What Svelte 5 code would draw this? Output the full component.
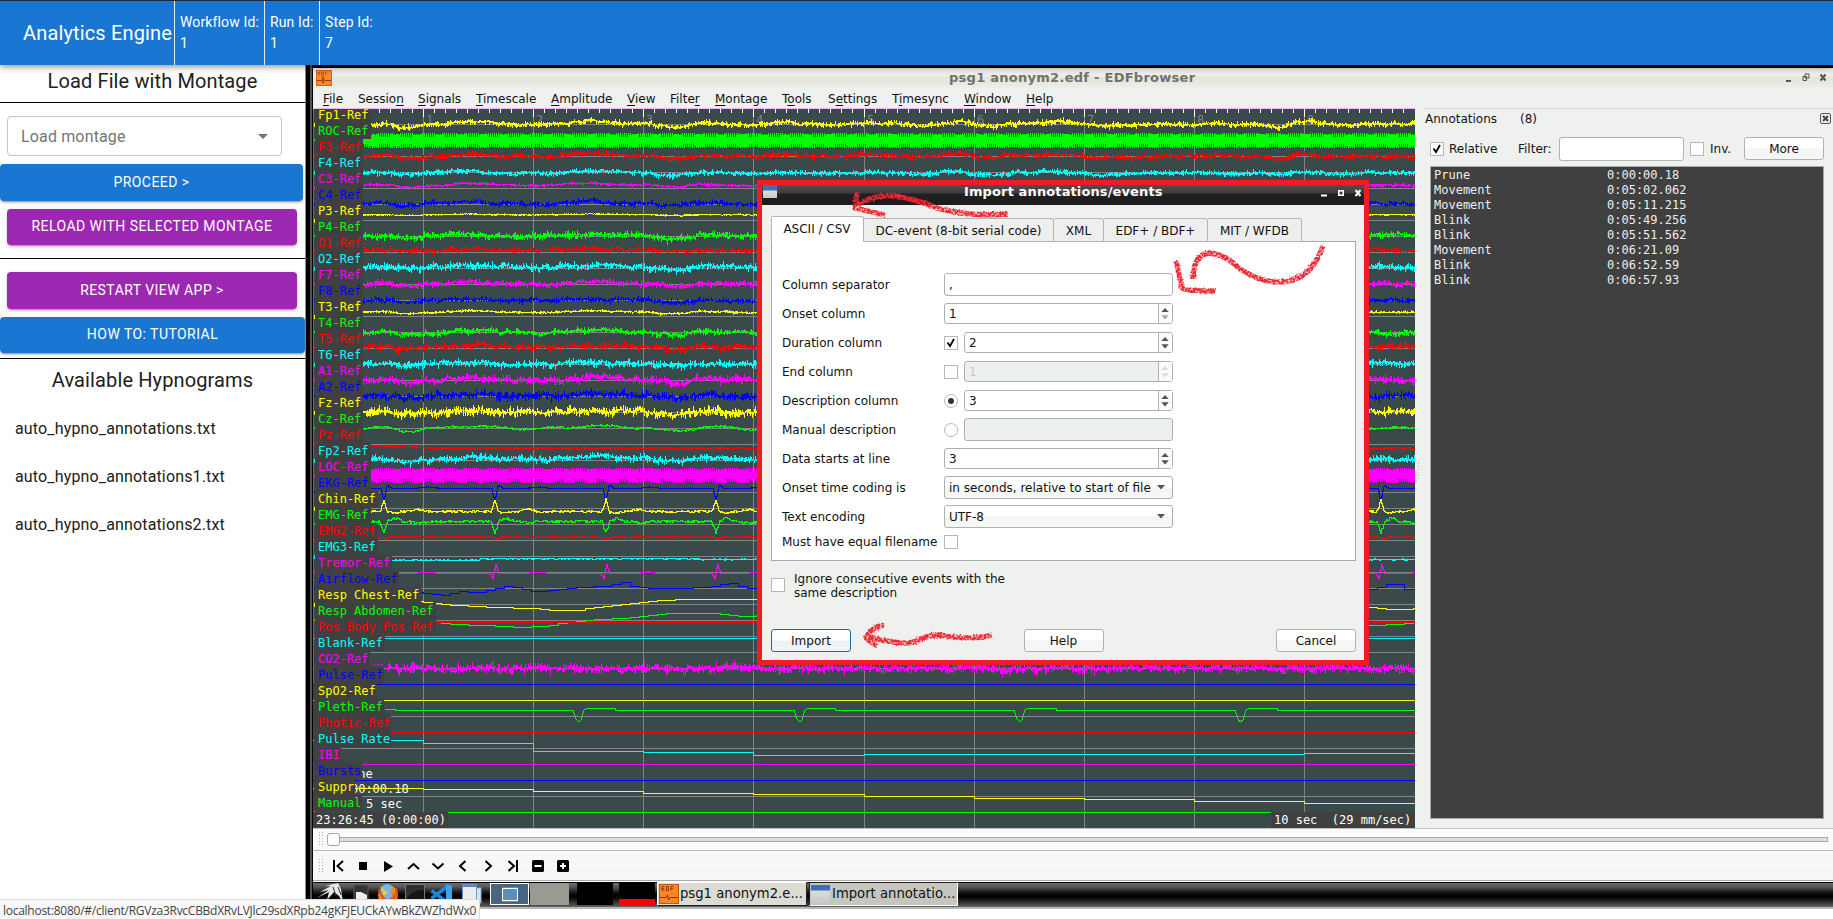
<script>
  const colors = ['#ffff00', '#00ff00', '#ff0000', '#00ffff', '#ff00ff', '#0000ff'];
  const names = ['Fp1-Ref', 'ROC-Ref', 'F3-Ref', 'F4-Ref', 'C3-Ref', 'C4-Ref', 'P3-Ref', 'P4-Ref', 'O1-Ref', 'O2-Ref', 'F7-Ref', 'F8-Ref', 'T3-Ref', 'T4-Ref', 'T5-Ref', 'T6-Ref', 'A1-Ref', 'A2-Ref', 'Fz-Ref', 'Cz-Ref', 'Pz-Ref', 'Fp2-Ref', 'LOC-Ref', 'EKG-Ref', 'Chin-Ref', 'EMG-Ref', 'EMG2-Ref', 'EMG3-Ref', 'Tremor-Ref', 'Airflow-Ref', 'Resp Chest-Ref', 'Resp Abdomen-Ref', 'Pos Body_Pos-Ref', 'Blank-Ref', 'CO2-Ref', 'Pulse-Ref', 'SpO2-Ref', 'Pleth-Ref', 'Photic-Ref', 'Pulse Rate', 'IBI', 'Bursts', 'Suppr', 'Manual'];
  const labels = names.map((name, i) => ({
    name, color: colors[i % 6], y: 107 + 16 * i,
    width: 5 + name.length * 7.22
  }));

  let seed = 20417;
  const rand = () => {
    seed = (seed * 1664525 + 1013904223) % 4294967296;
    return seed / 4294967296;
  };
  const drift = [[313, 0], [363, 0], [390, -1], [400, 3], [412, 3], [425, 0], [440, 0], [455, -3], [480, -3], [490, -1], [520, 0], [550, 0], [570, -2], [590, -4], [610, -2], [650, -1], [658, 2], [680, 3], [692, 0], [700, -2], [720, -1], [740, 0], [753, 1], [770, -1], [790, -3], [800, -1], [820, 0], [845, 1], [860, -2], [885, -1], [920, 1], [935, 0], [950, -3], [960, -4], [975, 0], [993, 3], [1010, 0], [1030, -1], [1060, -3], [1080, 0], [1098, 2], [1150, 0], [1240, 0], [1262, 0], [1278, 4], [1290, 0], [1302, -3], [1330, 0], [1350, 1], [1365, -1], [1415, 0]];
  function at(points, x) {
    for (let i = 1; i < points.length; i++) {
      const [x1, y1] = points[i];
      if (x <= x1) {
        const [x0, y0] = points[i - 1];
        return y0 + ((y1 - y0) * (x - x0)) / (x1 - x0);
      }
    }
    return points[points.length - 1][1];
  }
  function noisy(center, amp, slow, from = 363) {
    let d = '';
    const phase = rand() * 20;
    let w = 0;
    for (let x = from; x < 1415; x++) {
      w = w * 0.8 + (rand() - 0.5) * amp * 0.45;
      const c = center + at(drift, x) * slow * 0.85 + Math.sin(x / 17 + phase) * 0.35 * slow + w;
      const k = 0.35 + rand() * 0.95;
      const lo = Math.round(c - rand() * amp * k);
      const hi = Math.max(lo + 1, Math.round(c + rand() * amp * k + 0.6));
      d += `M${x + 0.5} ${lo}V${hi}`;
    }
    return d;
  }
  function comb(center) {
    let d = '';
    for (let x = 363; x < 1415; x++) {
      const beat = Math.sin(x * 0.29);
      const full = x % 2 === 0;
      const h = full ? 7 : beat > 0.1 ? 5 + Math.round(rand()) : 3;
      const shift = beat > 0.6 ? 1 : 0;
      d += `M${x + 0.5} ${center - h + (full ? shift : 0)}V${center + h + 1 - (full && beat < -0.5 ? 1 : 0)}`;
    }
    return d;
  }
  function fine(base, jitter, shape, from = 363) {
    let d = '';
    let prev = null;
    for (let x = from; x < 1415; x++) {
      const y = Math.round(base + shape(x) + (rand() - 0.5) * jitter);
      if (prev === null) prev = y;
      d += `M${x + 0.5} ${Math.min(prev, y)}V${Math.max(prev, y) + 1}`;
      prev = y;
    }
    return d;
  }
  const beats = Array.from({ length: 10 }, (_, i) => Math.round(383 + i * 110.8));
  const bump = (x, c, w, h) => h * Math.max(0, 1 - Math.abs(x - c) / w);
  const pulse = (f) => (x) => beats.reduce((sum, b) => sum + f(x - b), 0);
  const steps = (pts, from) => fine(0, 0, (x) => at(pts, Math.floor(x / 9) * 9), from);

  const traces = [];
  const add = (i, d) => traces.push({ color: colors[i % 6], d });
  const eeg = [[0, 124, 3, 1], [2, 156, 3, 0.9], [3, 173, 2.8, 0.7], [4, 185, 1.6, 0.6], [5, 203.5, 3, 0.8], [6, 214.5, 0.8, 0.3], [7, 235.5, 3.8, 0.7], [8, 250, 2.6, 0.4], [9, 267, 3.8, 0.7], [10, 284, 3.2, 0.9], [11, 300.5, 2.8, 0.7], [12, 312, 1.3, 0.5], [13, 332.5, 3.2, 0.8], [14, 347, 3.6, 0.7], [15, 364, 3.9, 0.7], [16, 380, 4.2, 0.9], [17, 396, 4.5, 0.7], [18, 412, 5, 0.6], [21, 459, 3.8, 0.8]];
  for (const [i, y, amp, slow] of eeg) add(i, noisy(y, amp, slow));
  add(1, comb(140));
  add(22, comb(475));
  add(19, fine(428, 2, (x) => at(drift, x) * 0.8 + Math.sin(x / 9)));
  add(20, fine(448, 1.8, (x) => (x < 440 ? -(440 - x) / 26 : 0)));
  add(23, fine(488, 0.4, pulse((t) => bump(t, 0, 3, 13) - bump(t, 4, 4, 3) - bump(t, 44, 14, 1.5))));
  add(24, fine(511, 1.8, pulse((t) => -bump(t, 0, 3.5, 12) - bump(t, 33, 9, 2.4) + bump(t, 9, 9, 1.6))));
  add(25, fine(521, 2.6, pulse((t) => bump(t, 0, 4, 11) - bump(t, 11, 8, 3.5) + bump(t, 34, 10, 2))));
  add(26, fine(536.5, 1.6, pulse((t) => bump(t, 2, 5, 2))));
  add(27, fine(559, 1.2, (x) => (x < 480 ? 0.7 : x < 700 ? -0.8 : 0), 392));
  add(28, fine(573, 0.6, pulse((t) => bump(t, 109, 3, 5) - bump(t, 112, 3, 9) - bump(t, 42, 12, 1.4)), 398));
  add(29, steps([[399, 587], [405, 589], [410, 592], [425, 593], [443, 595], [457, 591], [473, 593], [490, 589], [506, 585], [522, 589], [535, 592], [553, 589], [577, 587], [608, 586], [618, 581], [630, 586], [645, 588], [672, 588], [703, 587], [720, 584], [733, 583], [743, 588], [1200, 590], [1369, 589], [1380, 586], [1388, 583], [1398, 585], [1404, 589], [1415, 589]], 421));
  add(30, steps([[421, 602], [443, 604], [467, 606], [490, 607], [527, 608], [550, 610], [575, 610], [600, 606], [633, 603], [653, 600], [683, 599], [757, 599], [1200, 606], [1369, 607], [1385, 609], [1410, 609], [1415, 608]], 421));
  add(31, steps([[435, 622], [453, 624], [480, 625], [517, 627], [543, 626], [560, 623], [587, 620], [610, 618], [633, 617], [653, 614], [670, 613], [713, 613], [737, 616], [757, 615], [1200, 625], [1369, 625], [1388, 624], [1407, 623], [1415, 622]], 435));
  add(34, noisy(668, 5, 0, 386));
  add(34, 'M373 664.5h2M377 664.5h2M381 664.5h2');
  const flat = [[32, 622], [33, 638], [35, 684], [36, 700], [38, 732], [40, 764], [41, 780], [43, 812]];
  for (const [i, y] of flat) add(i, `M313 ${y + 0.5}H1415`);
  add(37, 'M385 709.5h10v1H573L576 719L579 722L581 720L584 710L587 708.5h28v2H794L797 719L800 722L802 720L805 710L808 708.5h27v2H1014L1017 719L1020 722L1022 720L1025 710L1028 708.5h28v2H1235L1238 719L1240 722L1243 720L1246 710L1249 708.5h28v2H1415');
  add(39, 'M313 740.5H423.5V743.5H533.5V751.5H643.5V752.5H753.5V755.5H864.5V754.5H1304.5V753.5H1415');
  add(42, 'M313 788.5H423.5V789.5H533.5V791.5H643.5V793.5H753.5V794.5H864.5V796.5H974.5V798.5H1084.5V799.5H1194.5V801.5H1304.5V803.5H1415');

  const gridX = [423, 533, 643, 753, 864, 974, 1084, 1194, 1304];
  const gridH = names.map((_, i) => `M315 ${124.5 + 16 * i}H1415`).join('');
  const gridV = gridX.map((x) => `M${x + 0.5} 109V828`).join('');
  let ticks = '';
  for (let i = 1; i < 100; i++) ticks += `M${Math.floor(313 + i * 11.02) + 0.5} 109v${i % 10 ? 4 : 8}`;

  const menu = [['', 'F', 'ile', 29], ['Sessio', 'n', '', 54], ['', 'S', 'ignals', 52], ['', 'T', 'imescale', 69], ['', 'A', 'mplitude', 70], ['', 'V', 'iew', 37], ['Filte', 'r', '', 39], ['', 'M', 'ontage', 61], ['T', 'o', 'ols', 40], ['S', 'e', 'ttings', 58], ['T', 'i', 'mesync', 66], ['', 'W', 'indow', 56], ['', 'H', 'elp', 40]];
  const annotations = [['Prune', '0:00:00.18'], ['Movement', '0:05:02.062'], ['Movement', '0:05:11.215'], ['Blink', '0:05:49.256'], ['Blink', '0:05:51.562'], ['Movement', '0:06:21.09'], ['Blink', '0:06:52.59'], ['Blink', '0:06:57.93']];
  const rows = [
    { label: 'Column separator', kind: 'text', value: ',' },
    { label: 'Onset column', kind: 'spin', value: '1', atMin: true },
    { label: 'Duration column', pre: 'checked', kind: 'spin', value: '2' },
    { label: 'End column', pre: 'check', kind: 'spin', value: '1', off: true },
    { label: 'Description column', pre: 'radio-on', kind: 'spin', value: '3' },
    { label: 'Manual description', pre: 'radio', kind: 'text', value: '', off: true },
    { label: 'Data starts at line', kind: 'spin', value: '3' },
    { label: 'Onset time coding is', kind: 'combo', value: 'in seconds, relative to start of file' },
    { label: 'Text encoding', kind: 'combo', value: 'UTF-8' }
  ];
  const tabs = [['ASCII / CSV', 93], ['DC-event (8-bit serial code)', 190], ['XML', 50], ['EDF+ / BDF+', 104], ['MIT / WFDB', 94]];
</script>

{#snippet tick()}
  <svg class="tick" viewBox="0 0 10 10"><path d="M1.5 4.5L4 8L8 1" fill="none" stroke="#000" stroke-width="1.8" /></svg>
{/snippet}

<div class="page">
  <header>
    <h1>Analytics Engine</h1>
    <div class="meta" style:width="90px"><span>Workflow Id:</span><span>1</span></div>
    <div class="meta" style:width="55px"><span>Run Id:</span><span>1</span></div>
    <div class="meta"><span>Step Id:</span><span>7</span></div>
  </header>
  <main>
    <aside>
      <h2 class="first">Load File with Montage</h2>
      <div class="select"><span>Load montage</span><svg width="24" height="24" viewBox="0 0 24 24"><path d="M7 10l5 5 5-5z" fill="#757575" /></svg></div>
      <button class="btn blue proceed">PROCEED &gt;</button>
      <button class="btn purple reload">RELOAD WITH SELECTED MONTAGE</button>
      <hr />
      <button class="btn purple restart">RESTART VIEW APP &gt;</button>
      <button class="btn blue tutorial">HOW TO: TUTORIAL</button>
      <hr class="tight" />
      <h2>Available Hypnograms</h2>
      <ul>
        <li>auto_hypno_annotations.txt</li>
        <li>auto_hypno_annotations1.txt</li>
        <li>auto_hypno_annotations2.txt</li>
      </ul>
    </aside>
    <section class="remote">
      <div class="desktop">
        <div class="titlebar">
          <svg class="edf" width="16" height="16" viewBox="0 0 16 16"><rect width="16" height="16" fill="#c25a14" /><rect x=".7" y=".7" width="14.6" height="14.6" fill="#ff8527" /><path d="M1 10.5H6L7 6.5V13L8 9.5L9 10.5H15" fill="none" stroke="#8a4210" /><path d="M2.500 2v3M2 2.500h2M2 4.500h2M5.500 2v3h2v-3zM9.500 5v-3h2" fill="none" stroke="#a3521a" stroke-width=".8" /></svg>
          <span>psg1 anonym2.edf - EDFbrowser</span>
          <svg class="winbtns" width="42" height="10" viewBox="0 0 42 10"><path d="M1 8h5" stroke="#555" stroke-width="2" /><path d="M20 1h4v4h-4zM18 3.500h3.500v4h-3.500z" fill="none" stroke="#555" /><path d="M35.500 1.500l5 6M40.500 1.500l-5 6" stroke="#555" stroke-width="2" /></svg>
        </div>
        <nav class="menu">
          {#each menu as [a, u, b, w]}<span style:width="{w}px">{a}<u>{u}</u>{b}</span>{/each}
        </nav>
        <div class="work">
          <svg class="signals" width="1102" height="720" viewBox="313 108 1102 720">
            <rect x="313" y="108" width="1102" height="720" fill="#3a4a4a" />
            <g fill="none" shape-rendering="crispEdges">
              <path d="M313 108.500H1415" stroke="#f2b5f2" />
              <path d={gridH + gridV} stroke="#848484" />
              <path d={ticks} stroke="#fff" />
            </g>
            <g class="mono" fill="#808080" font-size="12">
              {#each gridX as x, i}<text x={x + 3} y="124">{i === 8 ? 0 : i + 1}</text>{/each}
            </g>
            <g class="mono" fill="#fff" font-size="12"><text x="336.500" y="778">Prune</text><text x="336.500" y="793">0:00:00.18</text><text x="366" y="808">5 sec</text></g>
            <g fill="none" shape-rendering="crispEdges">
              {#each traces as t}<path d={t.d} stroke={t.color} />{/each}
              <path d="M313.500 109V684" stroke="#ff00ff" />
            </g>
            {#each labels as l, i}
              <rect x={i < 34 ? 315 : 314} y={Math.max(109, l.y)} width={Math.round(l.width)} height={i ? 16 : 14} fill="#404040" shape-rendering="crispEdges" />
              <rect x="314" y={l.y + 16} width="1" height={i % 3 ? 2 : 4} fill={l.color} />
            {/each}
            <g class="mono" font-size="12">
              {#each labels as l}<text x="318" y={l.y + 12} fill={l.color}>{l.name}</text>{/each}
            </g>
            <rect x="313" y="812" width="135" height="16" fill="#404040" />
            <rect x="1271" y="812" width="144" height="16" fill="#404040" />
            <g class="mono" fill="#fff" font-size="12">
              <text x="316" y="824">23:26:45 (0:00:00)</text>
              <text x="1274" y="824">10 sec&nbsp; (29 mm/sec)</text>
            </g>
          </svg>
          <div class="splitter"><i></i></div>
          <div class="dock">
            <div class="dock-title"><span>Annotations</span><span>(8)</span><svg width="11" height="11" viewBox="0 0 11 11"><rect x=".5" y=".5" width="10" height="10" rx="1.500" fill="none" stroke="#555" /><path d="M3 3l5 5M8 3l-5 5" stroke="#444" stroke-width="2" /></svg></div>
            <div class="dock-tools">
              <i class="box small">{@render tick()}</i><span class="rel">Relative</span><span class="flt">Filter:</span><div class="field"></div><i class="box small"></i><span class="inv">Inv.</span><button class="qt more">More</button>
            </div>
            <div class="list">
              {#each annotations as [name, time]}<div><span>{name}</span><span>{time}</span></div>{/each}
            </div>
          </div>
        </div>
        <div class="slider"><i class="grip"></i><i class="handle"></i><i class="groove"></i></div>
        <div class="tools">
          <i class="grip"></i>
          <svg width="260" height="16" viewBox="330 858 260 16">
            <g fill="none" stroke="#000" stroke-width="2"><path d="M334 860v12M343 861l-5.500 5 5.500 5M408 869l5.500-5 5.500 5M432.500 863.500l5.500 5 5.500-5M465.500 861l-5.500 5 5.500 5M485.500 861l5.500 5-5.500 5M508.500 861l5.500 5-5.500 5M517 860v12" /></g>
            <path d="M359 862h8v8h-8zM384 861v11l9-5.500z" />
            <rect x="532" y="860" width="12" height="12" rx="1.500" /><path d="M534.500 866h7" stroke="#fff" stroke-width="2" />
            <rect x="557" y="860" width="12" height="12" rx="1.500" /><path d="M560 866h6M563 863v6" stroke="#fff" stroke-width="2" />
          </svg>
        </div>
        <div class="taskbar">
          <svg class="launch" width="177" height="25" viewBox="313 883 177 25">
            <path d="M317 899l12-8-9 2 11-6-6 0 13-3 3 6 2 14-4-7-5-4-7 8 2-8z" fill="#e6e6e6" /><path d="M333 888l3 9M338 888l3 8" stroke="#333" fill="none" />
            <rect x="354" y="886" width="14" height="20" rx="1" fill="#333" stroke="#555" /><path d="M356 893h5l6 3v6h-11z" fill="#eee" />
            <circle cx="388" cy="896" r="10" fill="#f08a20" /><path d="M378 890q3 16 15 12q8-5 3-14l-2 8z" fill="#e05a13" /><path d="M381 888q6-6 12 0l-3 5 3 4-6 4-5-6z" fill="#78b8e6" /><path d="M380 887l5 5 3 1-4 4z" fill="#ffc54a" />
            <rect x="405.500" y="885.500" width="19" height="18" fill="#303030" stroke="#777" /><path d="M407 900q4-9 17-9v10h-17z" fill="#151515" />
            <path d="M431.500 891.500L449 905M431.500 899.500L449 886" fill="none" stroke="#1e86cc" stroke-width="3.500" /><path d="M446 885l6 2v18l-6 2z" fill="#36a7ef" />
            <rect x="466" y="889" width="15" height="15" fill="#dfe4ec" stroke="#8da8d0" /><rect x="462.500" y="885.500" width="14" height="16" fill="#ecece8" stroke="#6e93cb" /><path d="M462 887h15" stroke="#5585c8" stroke-width="2" />
          </svg>
          <div class="desk on"><i></i></div><div class="desk"></div>
          <div class="mon"></div><div class="mon red"></div>
          <div class="task"><svg width="20" height="20" viewBox="0 0 20 20"><rect x=".5" y=".5" width="19" height="19" fill="#ff8527" stroke="#c25a14" /><path d="M1 13.500H7L8.500 11L9.500 16L11 13.500H19" fill="none" stroke="#7a3a10" /><path d="M3 2.500v4M3 2.500h2.500M3 4.500h2M3 6.500h2.500M7.500 2.500v4h2v-4zM12 6.500v-4h2.500M12 4.500h2" fill="none" stroke="#7a3a10" stroke-width=".9" /></svg><span>psg1 anonym2.e...</span></div>
          <div class="task active"><i class="win"></i><span>Import annotatio...</span></div>
        </div>
      </div>
    </section>
  </main>

  <div class="dialog">
    <div class="dlg-title"><i class="win"></i><span>Import annotations/events</span>
      <svg width="42" height="10" viewBox="0 0 42 10"><path d="M1 7.500h6" stroke="#fff" stroke-width="2" /><rect x="18.800" y="2.800" width="4.400" height="4.400" fill="none" stroke="#fff" stroke-width="1.600" /><path d="M35.500 2l5 6M40.500 2l-5 6" stroke="#fff" stroke-width="2" /></svg>
    </div>
    <div class="dlg-body">
      <div class="tabs">{#each tabs as [t, w], i}<div class="tab" class:sel={i === 0} style:width="{w}px">{t}</div>{/each}</div>
      <div class="pane">
        {#each rows as r}
          <div class="row">
            <label>{r.label}</label>
            {#if r.pre}<i class={r.pre.startsWith('radio') ? 'box round' : 'box'}>{#if r.pre === 'checked'}{@render tick()}{:else if r.pre === 'radio-on'}<b></b>{/if}</i>{/if}
            <div class="ctl {r.kind}" class:off={r.off}>
              <span>{r.value}</span>
              {#if r.kind === 'spin'}<svg width="14" height="19" viewBox="0 0 14 19"><path d="M2.500 8l4-4.500L10.500 8z" fill={r.off ? '#ddd' : '#555'} /><path d="M2.500 11.500l4 4.500 4-4.500z" fill={r.off ? '#ddd' : r.atMin ? '#aaa' : '#555'} /></svg>
              {:else if r.kind === 'combo'}<svg class="arrow" width="8" height="5" viewBox="0 0 8 5"><path d="M0 0h8L4 4.500z" fill="#555" /></svg>{/if}
            </div>
          </div>
        {/each}
        <div class="row last"><label>Must have equal filename</label><i class="box"></i></div>
      </div>
      <div class="ignore"><i class="box"></i><span>Ignore consecutive events with the<br />same description</span></div>
      <div class="actions"><button class="qt default">Import</button><button class="qt">Help</button><button class="qt">Cancel</button></div>
    </div>
  </div>

  <svg class="marks" width="1833" height="919" viewBox="0 0 1833 919">
    <defs>
      <filter id="rough" x="-5%" y="-20%" width="110%" height="140%">
        <feTurbulence type="fractalNoise" baseFrequency=".45" numOctaves="2" seed="4" result="n" />
        <feDisplacementMap in="SourceGraphic" in2="n" scale="3" result="s" />
        <feColorMatrix in="n" type="matrix" values="0 0 0 0 0  0 0 0 0 0  0 0 0 0 0  0 2.6 0 0 -.45" result="m" />
        <feComposite in="s" in2="m" operator="in" />
      </filter>
    </defs>
    <g fill="none" stroke="#ee2830" stroke-width="5.300" filter="url(#rough)" stroke-linejoin="round">
      <path d="M857 192l-2 16l30 7M856 206q18-12 38-10q22 3 43 12q30 9 71 6" />
      <path d="M1176 261l6 27q2 3 34 3M1193 279q0-24 16-26q16 1 31 16q22 14 40 13q20-1 31-14q7-8 12-22" />
      <path d="M884 625q-14 3-18 13q4 4 11 8M867 636q18 6 35 7q10 1 18-4q16-6 25-3q20 3 39 1l8-2" />
    </g>
  </svg>
  <div class="status">localhost:8080/#/client/RGVza3RvcCBBdXRvLVJlc29sdXRpb24gKFJEUCkAYwBkZWZhdWx0</div>
</div>

<style>
  :global(body) { background: #fff; overflow: hidden; }
  * { box-sizing: border-box; }
  .page { position: relative; width: 1833px; height: 919px; overflow: hidden; font-family: Roboto, sans-serif; color: #212121; }
  header { position: relative; z-index: 1; height: 65px; display: flex; background: #1976d2; color: #fff; border-top: 1px solid #1d2a3a; box-shadow: 0 2px 4px -1px rgba(0,0,0,.2), 0 4px 5px rgba(0,0,0,.14), 0 1px 10px rgba(0,0,0,.12); }
  h1 { margin: 0; padding-left: 23px; width: 174px; font-size: 20px; font-weight: 400; letter-spacing: .15px; line-height: 64px; white-space: nowrap; }
  .meta { border-left: 1px solid #e4eefa; padding: 11px 0 0 5px; display: flex; flex-direction: column; font-size: 14px; line-height: 21px; letter-spacing: .13px; }
  main { display: flex; height: 844px; }
  aside { width: 305px; display: flex; flex-direction: column; }
  h2 { margin: 5px 0 0; font-size: 20px; font-weight: 400; line-height: 32px; letter-spacing: .12px; text-align: center; }
  h2.first { margin: 0; height: 38px; border-bottom: 1px solid #000; }
  .select { margin: 13px 0 0 7px; width: 275px; height: 40px; border: 1px solid #c4c4c4; border-radius: 4px; display: flex; align-items: center; justify-content: space-between; padding: 0 6px 0 13px; font-size: 16px; letter-spacing: .15px; color: #757575; }
  .btn { border: 0; padding: 0; border-radius: 4px; color: #fff; font: 400 14px Roboto, sans-serif; letter-spacing: .45px; box-shadow: 0 3px 1px -2px rgba(0,0,0,.2), 0 2px 2px rgba(0,0,0,.14), 0 1px 5px rgba(0,0,0,.12); }
  .blue { background: #1976d2; }
  .purple { background: #9c27b0; margin-left: 7px; width: 290px; }
  .proceed { width: 303px; height: 37px; margin-top: 8px; padding-bottom: 1px; }
  .reload { height: 36px; margin-top: 8px; padding-bottom: 2px; }
  .restart { height: 37px; margin-top: 13px; padding-bottom: 1px; }
  .tutorial { width: 305px; height: 36px; margin-top: 8px; padding-bottom: 2px; }
  hr { margin: 13px 0 0; width: 305px; border: 0; height: 1px; background: #000; }
  hr.tight { margin-top: 5px; }
  ul { list-style: none; margin: 9px 0 0; padding: 0 0 0 15px; font-size: 16px; line-height: 48px; letter-spacing: .15px; }
  .remote { flex: 1; border-left: 1px solid #888; padding: 3px 0 0 7px; background: linear-gradient(90deg, #000 4px, #555 4px 6px, #000 6px); }
  .desktop { width: 1520px; height: 841px; display: flex; flex-direction: column; font: 12px "DejaVu Sans", sans-serif; color: #111; background: #eef1ee; }
  .mono { font-family: "DejaVu Sans Mono", monospace; }
  .titlebar { height: 20px; display: flex; align-items: center; padding: 0 6px 1px 3px; background: linear-gradient(#e9ebe9, #eff0ec 8px, #e4e6dc 9px, #e6e7de 14px, #efefea); }
  .titlebar span { margin-left: 617px; width: 700px; font-size: 13px; font-weight: 700; letter-spacing: .27px; color: #6f726d; white-space: nowrap; }
  .winbtns { margin-left: auto; }
  .menu { height: 20px; padding: 2px 0 0 10px; display: flex; }
  .menu span { margin-right: 6px; line-height: 18px; flex: none; }
  u { text-underline-offset: 2px; }
  .work { height: 720px; display: flex; }
  .signals { display: block; flex: none; }
  .splitter { width: 9px; padding: 354px 0 0 2px; }
  .splitter i { display: block; width: 3px; height: 18px; background: radial-gradient(circle, #aaa .7px, transparent .9px) 0 0 / 3px 3px; }
  .dock { flex: 1; padding: 0 9px 9px 0; display: flex; flex-direction: column; border-top: 1px solid #d8dad8; }
  .dock-title { height: 21px; display: flex; align-items: center; padding: 0 0 2px 2px; margin-right: -7px; }
  .dock-title span:first-child { width: 95px; }
  .dock-title svg { margin-left: auto; }
  .dock-tools { height: 36px; padding: 1px 0 0 7px; display: flex; align-items: center; }
  .rel { margin-left: 5px; width: 69px; }
  .flt { width: 41px; }
  .field { width: 125px; height: 24px; margin-right: 6px; background: #fff; border: 1px solid #b0b3b0; border-radius: 3px; }
  .inv { width: 34px; margin-left: 6px; }
  .box { flex: none; width: 14px; height: 14px; background: #fff; border: 1px solid #b6b8b6; display: flex; align-items: center; justify-content: center; }
  .round { border-radius: 50%; }
  .round b { width: 6px; height: 6px; border-radius: 50%; background: #333; }
  .tick { width: 10px; height: 10px; }
  .qt { width: 80px; height: 23px; padding: 0; border: 1px solid #afb2af; border-radius: 3px; font: 12px "DejaVu Sans", sans-serif; color: #111; background: linear-gradient(#fff 45%, #f3f6f3 55%, #f6f8f6); }
  .qt.default { border-color: #246b98; background: linear-gradient(#fff 45%, #ecf1f3 55%, #f3f6f8); }
  .list { flex: 1; margin-left: 7px; background: #404040; border: 1px solid #a8aaa8; color: #eee; padding: 1px 0 0 3px; font: 12px/15px "DejaVu Sans Mono", monospace; }
  .list div { display: flex; }
  .list span:first-child { width: 173px; }
  .slider { height: 23px; border-top: 1px solid #bfc1bf; border-bottom: 1px solid #b9bbb9; display: flex; align-items: center; padding: 0 5px 1px; background: #fafbfa; }
  .grip { width: 5px; height: 16px; background: radial-gradient(circle, #aaa .7px, transparent .9px) 0 0 / 3px 3px; }
  .handle { margin-left: 4px; width: 13px; height: 13px; background: #fff; border: 1px solid #a6a6a6; border-radius: 3px; flex: none; }
  .groove { flex: 1; height: 5px; border: 1px solid #aaa; background: #ddd; border-left: 0; }
  .tools { height: 30px; border-bottom: 1px solid #aaa; background: linear-gradient(#f8faf8, #f5f5f5); display: flex; align-items: center; padding-left: 5px; }
  .tools svg { margin-left: 7px; }
  .taskbar { height: 28px; border-top: 1px solid #fff; display: flex; align-items: center; background: linear-gradient(#000 1px, #6d6d6d 1px, #555 5px, #1a1a1a 10px, #000 14px, #111 17px, #555 24px, #666 25px, #b8b8b8 25px); padding: 0 0 3px; }
  .launch { flex: none; }
  .desk { flex: none; width: 39px; height: 22px; background: #9a9a92; margin-right: 1px; }
  .desk.on { border: 1px solid #fff; background: #48667f; display: flex; align-items: center; justify-content: center; }
  .desk i { width: 16px; height: 13px; background: #5b8fc0; border: 1px solid #fff; box-shadow: 0 -1px #e06a1a, 0 1px #e06a1a; }
  .mon { flex: none; width: 36px; height: 22px; margin: 0 0 0 7px; background: #000; }
  .mon.red { margin: 0 2px 0 6px; background: linear-gradient(#000 16px, #f00 16px); }
  .task { width: 150px; height: 24px; background: #dcdcd4; border: 1px solid #fff; border-right-color: #222; border-bottom-color: #222; display: flex; align-items: center; gap: 1px; font-size: 13.200px; line-height: 20px; padding-left: 1px; margin-right: 2px; overflow: hidden; white-space: nowrap; color: #111; }
  .task.active { width: 149px; gap: 2px; background: #c6c6be; border-color: #222 #fff #fff #222; }
  .win { flex: none; display: block; width: 19px; height: 18px; background: linear-gradient(#3f6fb5 5px, #d8dcdd 6px, #c6cacb); }

  .dialog { position: absolute; left: 757px; top: 180px; width: 612px; height: 485px; border: 5px solid #ee1c24; background: #eef1ee; font: 12px "DejaVu Sans", sans-serif; color: #111; display: flex; flex-direction: column; }
  .dlg-title { height: 20px; display: flex; align-items: flex-start; padding: 0 2px 0 1px; background: linear-gradient(#505050, #3c3c3c 8px, #202020 9px, #1c1c1c); color: #fff; font-size: 13px; font-weight: 700; line-height: 14px; letter-spacing: .12px; }
  .dlg-title .win { width: 14px; height: 13px; }
  .dlg-title span { margin-left: 187px; }
  .dlg-title svg { margin: 3px 0 0 auto; }
  .dlg-body { padding: 11px 8px 0 9px; }
  .tabs { display: flex; height: 26px; align-items: flex-end; position: relative; z-index: 1; margin-bottom: -1px; }
  .tab { height: 24px; border: 1px solid #b3b6b3; border-left-width: 0; border-radius: 2px 3px 0 0; background: #eee; text-align: center; line-height: 24px; white-space: nowrap; }
  .tab.sel { height: 26px; background: #fff; border-left-width: 1px; border-bottom-color: #fff; line-height: 24px; padding-right: 1px; }
  .pane { height: 320px; border: 1px solid #aaa; background: #fff; padding: 28px 0 0 10px; }
  .row { height: 29px; display: flex; align-items: center; }
  .row label { width: 162px; white-space: nowrap; }
  .row .box { margin-right: 6px; }
  .row.last { height: 21px; }
  .ctl { flex: 1; max-width: 229px; height: 21px; border: 1px solid #adb0ad; border-radius: 3px; display: flex; align-items: center; justify-content: space-between; padding-left: 4px; white-space: nowrap; }
  .box + .ctl { max-width: 209px; }
  .ctl.text, .ctl.combo { height: 23px; }
  .ctl.spin svg { border-left: 1px solid #adb0ad; background: #fafbfa; }
  .ctl.combo { background: linear-gradient(#fff 45%, #f2f5f2 55%, #f6f8f6); padding-right: 7px; }
  .ctl.off { background: #edf1ed; color: #c4c6c4; }
  .ignore { display: flex; align-items: center; gap: 9px; margin-top: 3px; line-height: 14px; height: 42px; }
  .ignore span { padding-top: 2px; }
  .actions { display: flex; justify-content: space-between; margin-top: 23px; }
  .marks { position: absolute; left: 0; top: 0; pointer-events: none; }
  .status { position: absolute; left: 0; top: 899px; width: 480px; height: 21px; padding-left: 3px; background: #f8f8f8; border: 1px solid #dadada; border-left: 0; border-top-right-radius: 3px; font: 12px/22px "Open Sans", sans-serif; letter-spacing: -.265px; color: #444; white-space: nowrap; }
</style>
